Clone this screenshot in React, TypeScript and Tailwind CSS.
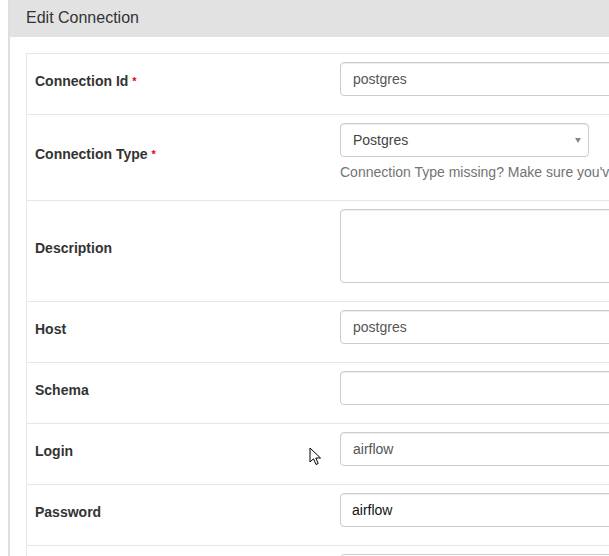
import { type FC, type ReactNode } from "react";

const inputCls =
  "mb-[10px] block h-[34px] w-full rounded border border-[#ccc] bg-white px-3 text-[14px] text-[#555] shadow-[inset_0_1px_1px_rgba(0,0,0,0.075)] outline-none";

const Row: FC<{ label: string; required?: boolean; children: ReactNode }> = ({
  label,
  required,
  children,
}) => (
  <div className="flex border-b border-[#e6e6e6]">
    <div className="flex w-[305px] shrink-0 items-center px-2 pb-[7px]">
      <label className="font-bold text-[#333]">
        {label}
        {required && <span className="ml-1 text-[11px] text-red-600 align-top">*</span>}
      </label>
    </div>
    <div className="w-[700px] px-2 pt-2 pb-2">{children}</div>
  </div>
);

const Cursor: FC = () => (
  <svg
    className="absolute left-[309px] top-[447px]"
    width="13"
    height="20"
    viewBox="0 0 13 20"
  >
    <path
      d="M1 1 L1 15 L4.5 11.8 L7 17.5 L9.2 16.5 L6.8 11 L11.5 11 Z"
      fill="#fff"
      stroke="#000"
      strokeWidth="1"
      strokeLinejoin="round"
    />
  </svg>
);

const App: FC = () => {
  return (
    <div className="relative h-screen w-screen overflow-hidden bg-white font-['Liberation_Sans',Arial,sans-serif] text-[14px] leading-5 text-[#333]">
      <div className="w-[1200px] pl-2">
        <div className="border-l-2 border-[#dedede]">
          <div className="flex h-[37px] items-center bg-[#e2e2e2] pb-[2px] pl-4 text-[16px] text-[#333]">
            Edit Connection
          </div>
          <div className="pl-4 pt-4">
            <div className="border-l border-t border-[#e6e6e6]">
              <Row label="Connection Id" required>
                <input className={inputCls} readOnly value="postgres" />
              </Row>
              <Row label="Connection Type" required>
                <div className="relative flex h-[34px] w-[249px] items-center rounded border border-[#ccc] bg-white px-3 text-[#444] shadow-[inset_0_1px_1px_rgba(0,0,0,0.075)]">
                  Postgres
                  <span className="absolute right-[7px] top-[14px] h-0 w-0 border-x-[3.5px] border-t-[5px] border-x-transparent border-t-[#888]" />
                </div>
                <p className="mb-[10px] mt-[5px] whitespace-nowrap text-[#737373]">
                  Connection Type missing? Make sure you've installed the corresponding Airflow Provider Package.
                </p>
              </Row>
              <Row label="Description">
                <textarea className={`${inputCls} h-[74px] resize-none py-1.5`} readOnly />
              </Row>
              <Row label="Host">
                <input className={inputCls} readOnly value="postgres" />
              </Row>
              <Row label="Schema">
                <input className={inputCls} readOnly value="" />
              </Row>
              <Row label="Login">
                <input className={inputCls} readOnly value="airflow" />
              </Row>
              <Row label="Password">
                <input
                  className={`${inputCls} !px-[11px] !text-[#111]`}
                  readOnly
                  value="airflow"
                />
              </Row>
              <div className="flex">
                <div className="w-[305px] shrink-0" />
                <div className="w-[700px] px-2 pt-2">
                  <div className="h-[34px] rounded border border-[#ccc] bg-white" />
                </div>
              </div>
            </div>
          </div>
        </div>
      </div>
      <Cursor />
    </div>
  );
};

export default App;
